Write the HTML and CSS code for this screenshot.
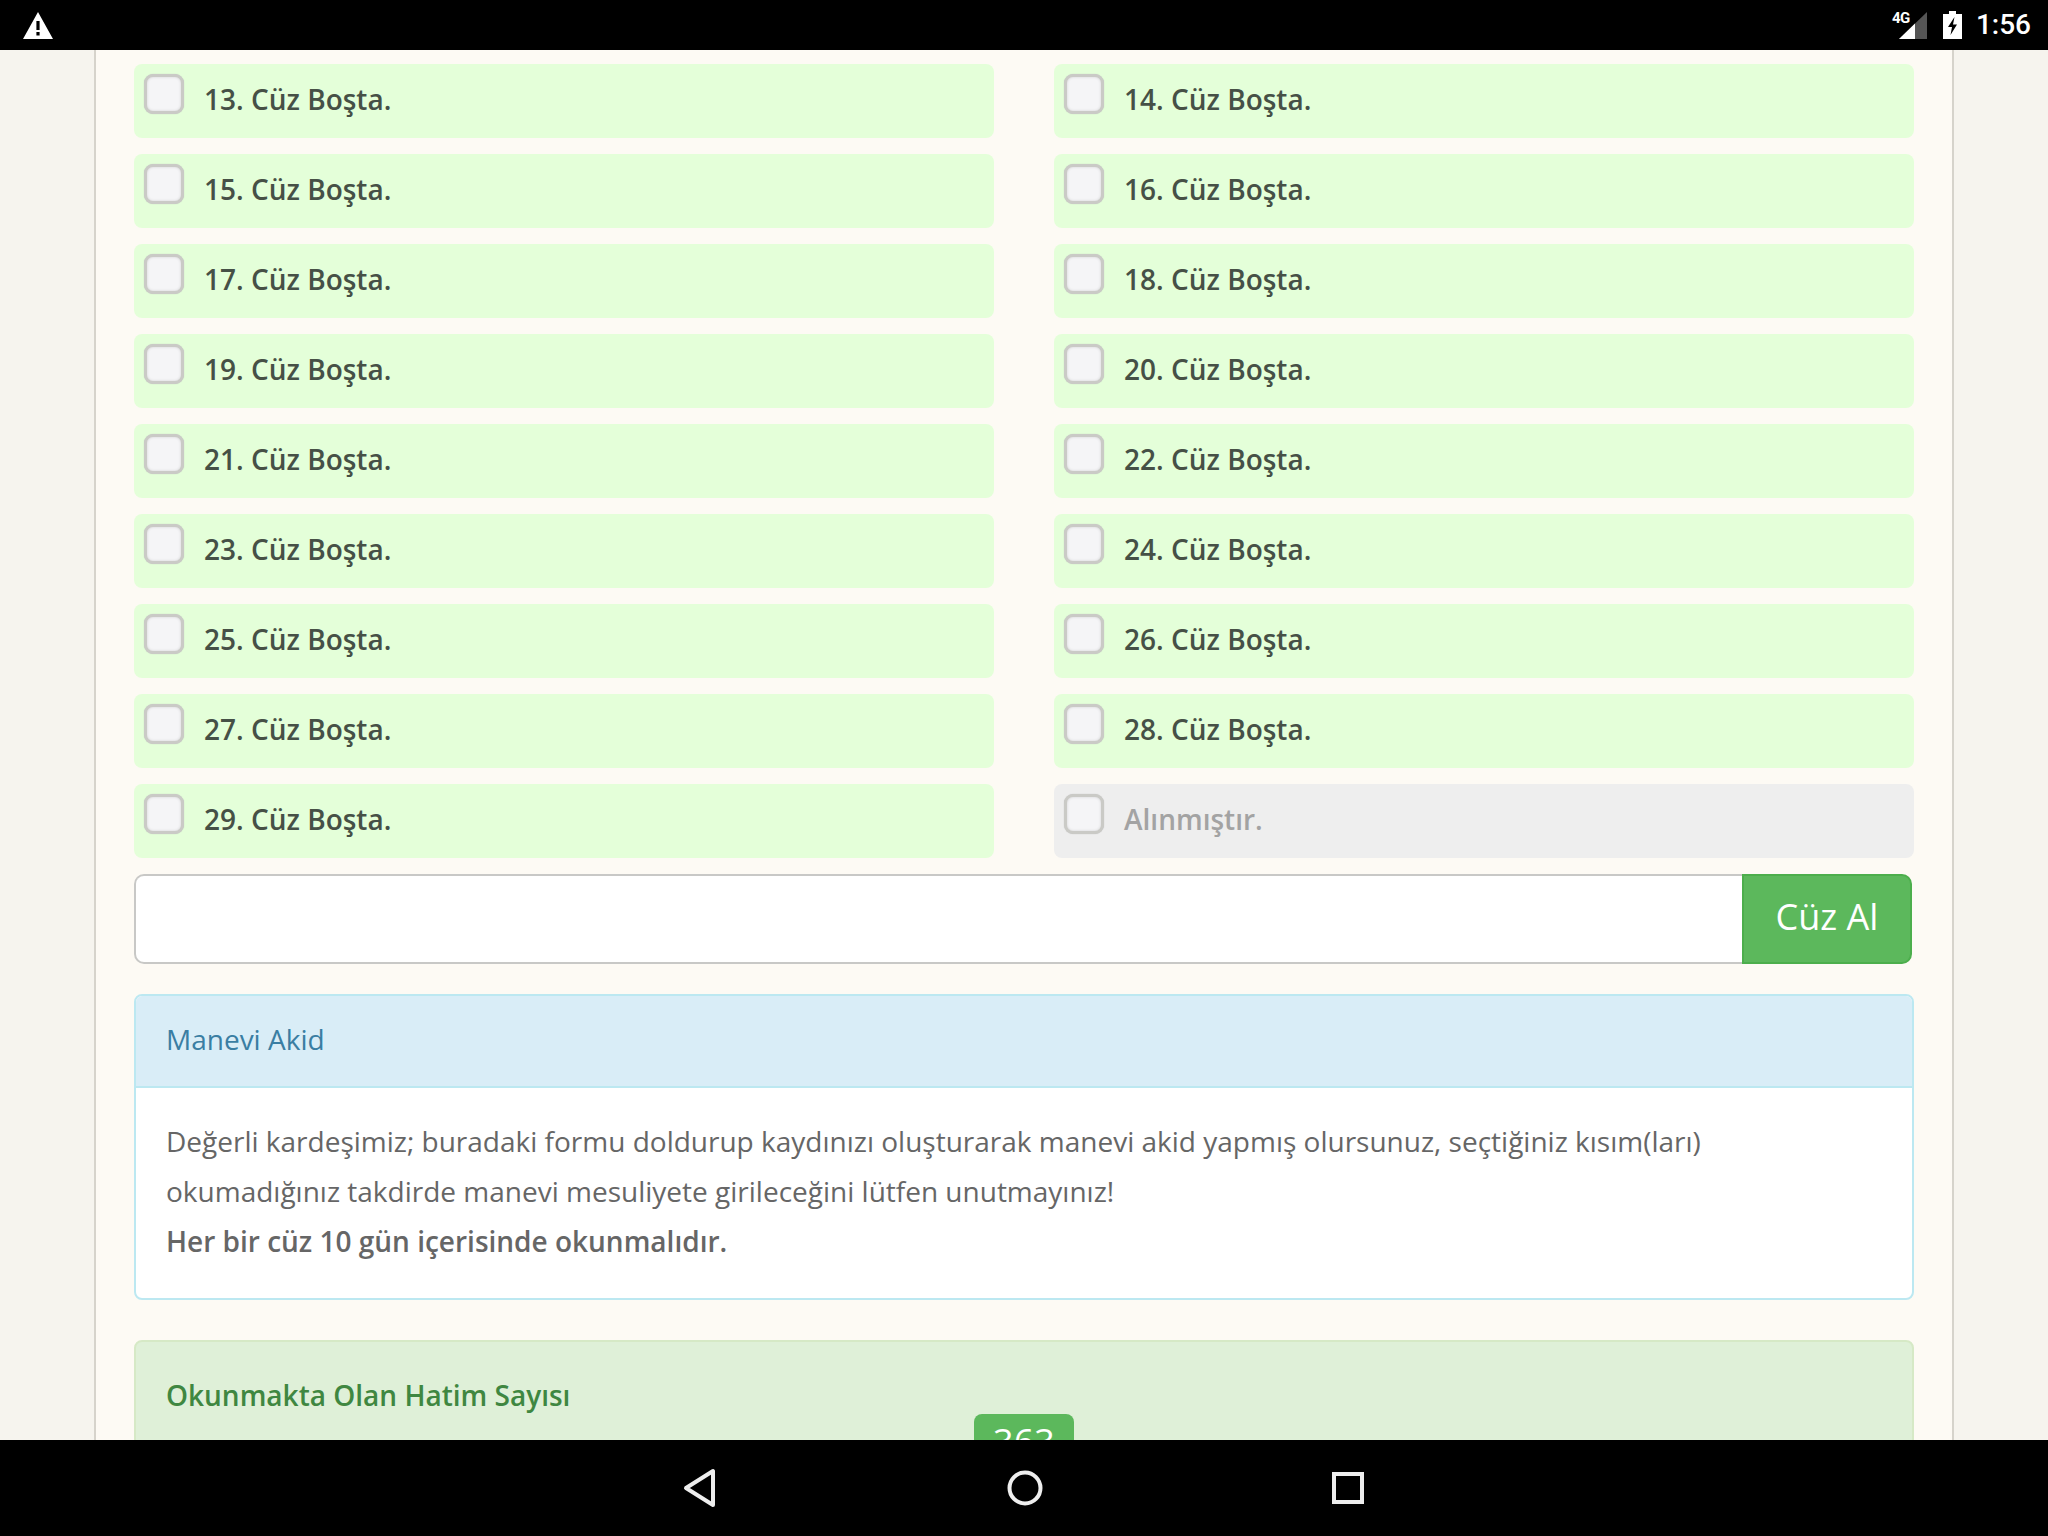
FILE: index.html
```html
<!DOCTYPE html>
<html lang="tr">
<head>
<meta charset="utf-8">
<title>Cüz Al</title>
<link rel="stylesheet" href="styles.css">
</head>
<body>
<div class="screen">
  <header class="status">
    <svg class="warn" viewBox="0 0 30 27" width="30" height="27"><path fill="#fff" fill-rule="evenodd" d="M15 0 30 27H0ZM13.4 9v9h3.2V9ZM13.4 20v3.4h3.2V20Z"/></svg>
    <div class="status-right">
      <div class="signal">
        <span class="net">4G</span>
        <svg viewBox="0 0 28 27" width="28" height="27"><path fill="#555" d="M28 0V27H0Z"/><path fill="#fff" d="M16 11.600V27H0Z"/></svg>
      </div>
      <svg class="batt" viewBox="0 0 19 28" width="19" height="28"><path fill="#fff" fill-rule="evenodd" d="M6 0h7v3h6v25H0V3h6ZM11.500 6 5 16h4l-1.500 8L14 13.500h-4Z"/></svg>
      <span class="time">1:56</span>
    </div>
  </header>
  <main class="viewport">
    <div class="container">
      <div class="juz-grid">
        <label class="juz"><input type="checkbox"><span>13. Cüz Boşta.</span></label>
        <label class="juz"><input type="checkbox"><span>14. Cüz Boşta.</span></label>
        <label class="juz"><input type="checkbox"><span>15. Cüz Boşta.</span></label>
        <label class="juz"><input type="checkbox"><span>16. Cüz Boşta.</span></label>
        <label class="juz"><input type="checkbox"><span>17. Cüz Boşta.</span></label>
        <label class="juz"><input type="checkbox"><span>18. Cüz Boşta.</span></label>
        <label class="juz"><input type="checkbox"><span>19. Cüz Boşta.</span></label>
        <label class="juz"><input type="checkbox"><span>20. Cüz Boşta.</span></label>
        <label class="juz"><input type="checkbox"><span>21. Cüz Boşta.</span></label>
        <label class="juz"><input type="checkbox"><span>22. Cüz Boşta.</span></label>
        <label class="juz"><input type="checkbox"><span>23. Cüz Boşta.</span></label>
        <label class="juz"><input type="checkbox"><span>24. Cüz Boşta.</span></label>
        <label class="juz"><input type="checkbox"><span>25. Cüz Boşta.</span></label>
        <label class="juz"><input type="checkbox"><span>26. Cüz Boşta.</span></label>
        <label class="juz"><input type="checkbox"><span>27. Cüz Boşta.</span></label>
        <label class="juz"><input type="checkbox"><span>28. Cüz Boşta.</span></label>
        <label class="juz"><input type="checkbox"><span>29. Cüz Boşta.</span></label>
        <label class="juz taken"><input type="checkbox" disabled><span>Alınmıştır.</span></label>
      </div>
      <form class="input-group">
        <input class="name" type="text">
        <button class="take" type="button">Cüz Al</button>
      </form>
      <section class="panel">
        <h3 class="panel-head">Manevi Akid</h3>
        <div class="panel-body">
          Değerli kardeşimiz; buradaki formu doldurup kaydınızı oluşturarak manevi akid yapmış olursunuz, seçtiğiniz kısım(ları) okumadığınız takdirde manevi mesuliyete girileceğini lütfen unutmayınız!<br>
          <strong>Her bir cüz 10 gün içerisinde okunmalıdır.</strong>
        </div>
      </section>
      <section class="stats">
        <h3 class="stats-head">Okunmakta Olan Hatim Sayısı</h3>
        <span class="badge">363</span>
      </section>
    </div>
  </main>
  <nav class="navbar">
    <svg viewBox="0 0 36 40" width="36" height="40"><path fill="none" stroke="#eee" stroke-width="4" stroke-linejoin="round" d="M31 3V37L4 20Z"/></svg>
    <svg viewBox="0 0 36 36" width="36" height="36"><circle cx="18" cy="18" r="15.500" fill="none" stroke="#eee" stroke-width="4"/></svg>
    <svg viewBox="0 0 32 32" width="32" height="32"><rect x="2" y="2" width="28" height="28" fill="none" stroke="#eee" stroke-width="4"/></svg>
  </nav>
</div>
</body>
</html>
```

FILE: styles.css
```css
* { box-sizing: border-box; }
html, body { margin: 0; padding: 0; }
body { font-family: "Open Sans", sans-serif; background: #f6f4ee; }
.screen { width: 2048px; height: 1536px; display: flex; flex-direction: column; overflow: hidden; }

.status { height: 50px; flex: none; background: #000; display: flex; align-items: center; justify-content: space-between; padding: 0 17px 0 23px; }
.status-right { display: flex; align-items: center; }
.signal { position: relative; width: 28px; height: 27px; margin-right: 16px; }
.signal svg { display: block; }
.net { position: absolute; left: -7px; top: -2px; font: 700 15px/16px Roboto, sans-serif; color: #fff; letter-spacing: -.5px; }
.batt { margin-right: 14px; }
.time { font: 500 28px/52px Roboto, sans-serif; color: #fff; }

.viewport { flex: 1; min-height: 0; overflow: hidden; background: #f6f4ee; }
.container { width: 1860px; margin-left: 94px; height: 100%; background: #fdfaf4; border: solid #d6d3cb; border-width: 0 2px; padding: 14px 38px 0; }

.juz-grid { display: grid; grid-template-columns: 860px 860px; column-gap: 60px; row-gap: 16px; }
.juz { height: 74px; display: flex; align-items: flex-start; background: #e4ffd9; border-radius: 8px; padding: 10px 10px 0; color: #465046; font-size: 28px; font-weight: 600; line-height: 50px; }
.juz input { appearance: none; width: 40px; height: 40px; margin: 0 20px 0 0; flex: none; background: #f5f5f7; border: 3px solid #cacac6; border-radius: 9px; box-shadow: inset 0 0 3px rgba(0,0,0,.14), 0 0 1px #bbb; }
.juz span { display: block; }
.taken { background: #eee; color: #a3a3a3; }

.input-group { display: flex; width: 1778px; height: 90px; margin-top: 16px; }
.name { flex: 1; min-width: 0; background: #fff; border: 2px solid #c8c8c6; border-right: 0; border-radius: 10px 0 0 10px; }
.take { width: 170px; background: #5cb85c; border: 2px solid #4cae4c; border-radius: 0 10px 10px 0; color: #fff; font: 400 36px/80px "Open Sans", sans-serif; padding: 0 0 4px; }

.panel { margin-top: 30px; width: 1780px; background: #fff; border: 2px solid #bce8f1; border-radius: 8px; overflow: hidden; }
.panel-head { margin: 0; height: 92px; background: #d9edf7; border-bottom: 2px solid #bce8f1; color: #3a7ea3; font-size: 28px; font-weight: 400; line-height: 86px; padding: 0 30px; }
.panel-body { height: 210px; padding: 28px 30px 0; color: #666; font-size: 28px; line-height: 50px; }
.panel-body strong { font-weight: 600; }

.stats { position: relative; margin-top: 40px; width: 1780px; height: 200px; background: #dff0d8; border: 2px solid #d6e9c6; border-radius: 8px; padding: 0 30px; }
.stats-head { margin: 0; color: #3f8741; font-size: 28px; font-weight: 600; line-height: 50px; padding-top: 28px; }
.badge { position: absolute; left: 838px; top: 72px; width: 100px; height: 60px; background: #5cb85c; border-radius: 8px; color: #fff; font-size: 36px; line-height: 56px; text-align: center; }

.navbar { height: 96px; flex: none; background: #000; display: flex; align-items: center; justify-content: center; gap: 289px; padding-right: 3px; }
```
